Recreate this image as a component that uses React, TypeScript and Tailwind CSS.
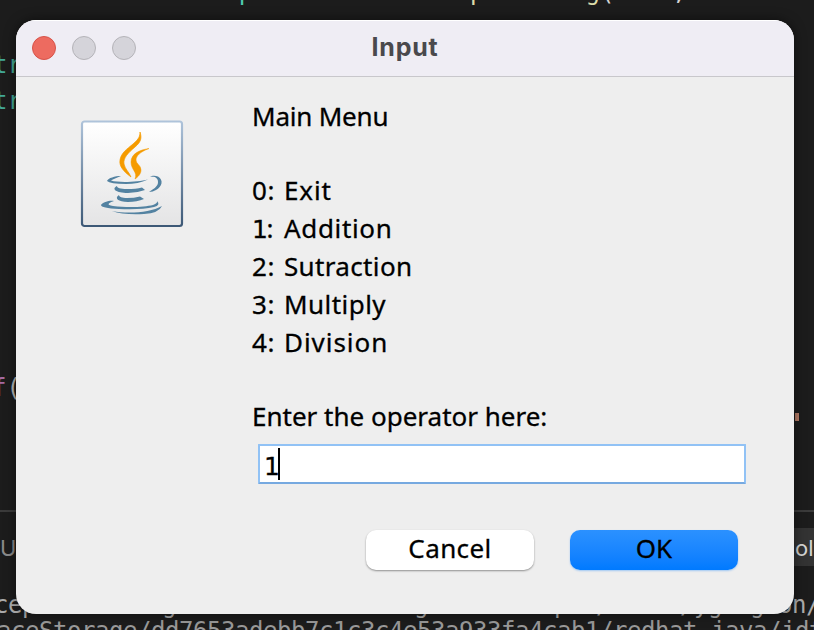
import type { ReactNode } from "react";

const mono = "font-['DejaVu_Sans_Mono',monospace] text-[24px] leading-[36px] whitespace-pre";

function One() {
  return <span className="font-['DejaVu_Sans',sans-serif] text-[25px] tracking-[-1.5px]">1</span>;
}

function MenuLine({ n, label, spacing }: { n: ReactNode; label: string; spacing: string }) {
  return (
    <div className="flex h-[38px]">
      <span className="w-[32px] tracking-[0.5px]">{n}:</span>
      <span className={spacing}>{label}</span>
    </div>
  );
}

function Editor() {
  return (
    <div className={`flex h-[630px] flex-col overflow-hidden bg-[#1c1c1c] text-[#d4d4d4] ${mono}`}>
      <div className="-mt-[26px] h-[73px] shrink-0 pl-[22px] text-[#6fa8d8]">
        {"userChoose = "}<span className="text-[#4ec9b0]">JOptionPane</span>.
        <span className="text-[#dcdcaa]">showInputDialog</span>
        <span className="text-[#d4d4d4]">(</span>null<span className="text-[#d4d4d4]">,</span>{" menuChoice"}
      </div>
      <div className="-ml-[7px] h-[36px] shrink-0 text-[#42a894]">tring</div>
      <div className="-ml-[7px] h-[287px] shrink-0 text-[#42a894]">tring</div>
      <div className="-ml-[8px] h-[36px] shrink-0 text-[#a66aa1]">f<span className="text-[#b9b9b9]">(</span></div>
      <div className="flex h-[104px] shrink-0 justify-end pt-[7px] pr-[15px]"><span className="h-2 w-1 bg-[#b77d67]" /></div>
      <div className="flex h-[77px] shrink-0 items-start justify-between border-t-2 border-[#3b3b3b] pt-4 font-['Inter',sans-serif] text-[22px]">
        <span className="mt-[2px] text-[#8b8b8b]">U</span>
        <span className="h-[38px] w-[24px] bg-[#333] pt-[2px] pl-[5px]">ol</span>
      </div>
      <div className="-ml-[6px] h-[26px] shrink-0 tracking-[-0.45px] text-[#aaa]">{"ceptionMessages -Dfile.encoding=UTF-8 -cp  /Users/yghagson/"}</div>
      <div className="-ml-[3px] shrink-0 tracking-[-0.45px] text-[#999]">aceStorage/dd7653adebb7c1c3c4e53a933fa4cab1/redhat.java/jdt</div>
    </div>
  );
}

function JavaIcon() {
  return (
    <svg width="104" height="108" viewBox="0 0 104 108" fill="none">
      <defs>
        <linearGradient id="face" x1="0" y1="0" x2="0" y2="1"><stop stopColor="#fff" /><stop offset="1" stopColor="#e4e4e5" /></linearGradient>
        <linearGradient id="edge" x1="0" y1="0" x2="0" y2="1"><stop stopColor="#aec3da" /><stop offset="1" stopColor="#3c5876" /></linearGradient>
      </defs>
      <rect x="2" y="1.5" width="100" height="104.500" rx="2.500" fill="url(#face)" stroke="url(#edge)" strokeWidth="2.200" />
      <g transform="translate(-10 -10)">
        <path d="M70 22C72 28 71 32 65 37C58 43 53 48 54 54C55 59 59 62 61 67C53 61 49 56 50 50C51 43 57 39 63 34C69 29 70 26 70 22Z" fill="#f59b00" stroke="#f59b00" strokeWidth=".7" />
        <path d="M79 38.500C70 42 66 46 66 50C66 54 71 55 71 60C71 64 68 67 65 69C68 62 61 60 61 52C61 44 69 40 79 38.500Z" fill="#f59b00" stroke="#f59b00" strokeWidth=".5" />
        <g fill="#5382a1">
          <path d="M51 66Q43 69 41 70.500C49 73 68 72 78 69.500Q68 74 56 74Q40 74 37 71C38 68 45 66 51 66Z" />
          <path d="M80 67C82 65.500 85 65.500 88 66.500C94 70 92 77 86 80Q83 82 79 82C85 78 88 76 88 72C88 68 85 66 80 67Z" />
          <path d="M47 76C47 78 50 79 57 79Q66 79 72 77.500L75 80Q67 83 58 83C46 83 41 79 47 76Z" />
          <path d="M49 85C49 87 52 88 57 88Q64 88 70 86.500L74 89Q67 92 58 92C48 92 44 88 49 85Z" />
          <path d="M44 91C38 93 36 95 43 96C58 98 75 97 83 95Q88 93 87 91Q91 95 84 97Q71 100 49 99Q31 98 31 95C33 92 40 90 44 91Z" />
          <path d="M42 101C57 104 80 103 92 96Q89 103 74 104Q53 105 42 101Z" />
        </g>
      </g>
    </svg>
  );
}

export default function App() {
  return (
    <main className="relative h-[630px] w-[814px] overflow-hidden">
      <Editor />
      <section className="absolute top-[20px] left-[16px] flex h-[594px] w-[778px] flex-col overflow-hidden rounded-[20px] bg-[#eee] font-['Noto_Sans',sans-serif] text-[26px] text-black shadow-[0_0_12px_#0008]">
        <header className="grid h-[57px] shrink-0 grid-cols-3 items-center border-t border-b border-t-white border-b-[#c8c7cb] bg-[#efedf4] pr-4 pb-px pl-4">
          <div className="flex gap-4">
            <span className="size-6 rounded-full border border-[#d65349] bg-[#ed6b60]" />
            <span className="size-6 rounded-full border border-[#b4b3b8] bg-[#d5d4da]" />
            <span className="size-6 rounded-full border border-[#b4b3b8] bg-[#d5d4da]" />
          </div>
          <h1 className="-mt-px text-center font-['Inter',sans-serif] text-[25px] font-bold tracking-[0.8px] text-[#4a494c]">Input</h1>
        </header>
        <div className="flex">
          <div className="w-[236px] pt-[43px] pl-[64px]"><JavaIcon /></div>
          <div className="pt-[20px] leading-[38px] [-webkit-text-stroke:0.3px_#000]">
            <div className="h-[74px] tracking-[-0.2px]">Main Menu</div>
            <MenuLine n="0" label="Exit" spacing="tracking-[0.9px]" />
            <MenuLine n={<One />} label="Addition" spacing="tracking-[0.65px]" />
            <MenuLine n="2" label="Sutraction" spacing="tracking-[0.35px]" />
            <MenuLine n="3" label="Multiply" spacing="tracking-[0.45px]" />
            <MenuLine n="4" label="Division" spacing="tracking-[0.95px]" />
            <div className="mt-[36px] h-[38px]">Enter the operator here:</div>
            <div className="mt-[9px] ml-[6px] flex h-[40px] w-[488px] items-center rounded-[1px] border-2 border-[#91c2f5] border-b-[#76a9e0] bg-white pl-[4px]"><span className="pt-[3px]"><One /></span><span className="h-8 w-[2px] bg-black" /></div>
          </div>
        </div>
        <div className="mt-[46px] flex gap-[36px] pl-[350px] leading-[36px] [-webkit-text-stroke:0.3px_#000]">
          <button className="h-10 w-[168px] rounded-[10px] bg-white pb-1 tracking-[0.4px] shadow-[0_1px_2px_#0006]">Cancel</button>
          <button className="h-10 w-[168px] rounded-[10px] bg-linear-to-b from-[#2b91ff] to-[#007aff] pb-1 shadow-[0_1px_2px_#007aff55]">OK</button>
        </div>
      </section>
    </main>
  );
}
